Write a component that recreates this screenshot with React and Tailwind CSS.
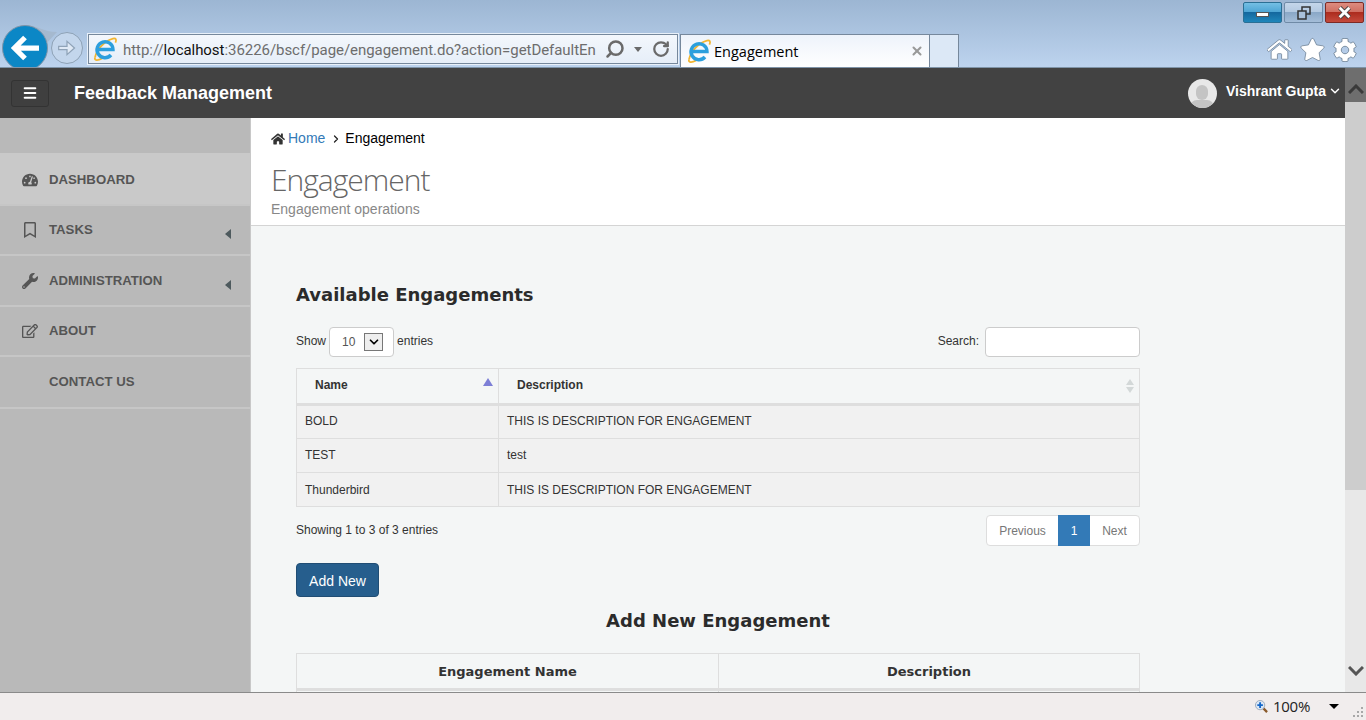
import { Search, RotateCw, X, ChevronDown, ChevronRight, Menu } from "lucide-react";
import { FaHome, FaStar, FaCog, FaTachometerAlt, FaRegBookmark, FaWrench, FaRegEdit } from "react-icons/fa";

const IeLogo = ({ className }) => (
    <svg viewBox="0 0 26 26" className={className}>
        <path d="M3 21.5C4.5 14 12 5 21 2.6c3-.7 3.8 1.2 2.4 4" fill="none" stroke="#f2b632" strokeWidth="1.8" />
        <path d="M3 21.5c-1 3 2.500 3.500 7 1" fill="none" stroke="#f2b632" strokeWidth="1.8" />
        <path d="M6.500 13.500h14.500a8 8 0 1 0-2 5.500" fill="none" stroke="#2c9fdd" strokeWidth="3.400" />
    </svg>
);

const navItems = [
    { label: "DASHBOARD", icon: FaTachometerAlt, active: true, h: "h-[53px] pt-[2px]" },
    { label: "TASKS", icon: FaRegBookmark, arrow: true, h: "h-[50px]" },
    { label: "ADMINISTRATION", icon: FaWrench, arrow: true, h: "h-[51px]" },
    { label: "ABOUT", icon: FaRegEdit, h: "h-[50px]" },
    { label: "CONTACT US", h: "h-[52px]" },
];

const rows = [
    ["BOLD", "THIS IS DESCRIPTION FOR ENGAGEMENT", "pb-[2px]"],
    ["TEST", "test", "pb-[2px]"],
    ["Thunderbird", "THIS IS DESCRIPTION FOR ENGAGEMENT", "pb-0"],
];

const BrowserChrome = () => (
    <div className="relative h-[68px] shrink-0 overflow-hidden bg-gradient-to-b from-[#9cb6d3] to-[#bdd3ee] border-b border-[#7f94a8]">
        <div className="flex justify-end gap-[2px] pt-[2px] pr-[2px]">
            <div className="w-[39px] h-[21px] rounded-[2px] border border-[#2b6f94] bg-[linear-gradient(#74bfe4_0%,#4ba3d3_50%,#14689f_50%,#1f86ba_100%)] flex items-center justify-center">
                <div className="w-[13px] h-[5px] mt-[4px] bg-white border border-[#555]"></div>
            </div>
            <div className="w-[39px] h-[21px] rounded-[2px] border border-[#6f8aa6] bg-[linear-gradient(#c4d6ea_0%,#b2c8e0_50%,#8aa8c7_50%,#a4bdd8_100%)] flex items-center justify-center">
                <svg viewBox="0 0 14 14" className="w-[14px] h-[14px]" fill="none" stroke="#333" strokeWidth="1.5">
                    <rect x="5" y="1" width="8" height="7" />
                    <rect x="1" y="5" width="8" height="8" fill="#a9c0d9" />
                </svg>
            </div>
            <div className="w-[39px] h-[21px] rounded-[2px] border border-[#7d2a25] bg-[linear-gradient(#dd8c80_0%,#cf6d60_50%,#ad2c1e_50%,#c44a3c_100%)] flex items-center justify-center">
                <svg viewBox="0 0 14 14" className="w-[15px] h-[15px]">
                    <path d="M2.500 2.500l9 9M11.500 2.500l-9 9" stroke="#444" strokeWidth="4.200" />
                    <path d="M2.500 2.500l9 9M11.500 2.500l-9 9" stroke="#fff" strokeWidth="2.600" />
                </svg>
            </div>
        </div>
        <div className="flex items-start pl-[88px] mt-[11px]">
            <div className="w-[590px] h-[30px] bg-gradient-to-b from-[#f3f7fc] to-[#e6eef8] border border-[#76889c] flex items-center shadow-[0_0_0_1px_#e8f0f9]">
                <IeLogo className="w-[26px] h-[26px] ml-[3px] mr-[5px] shrink-0" />
                <div className="w-[474px] shrink-0 whitespace-nowrap text-[15px] tracking-[-0.05px] text-[#6d6d6d] font-['Roboto',sans-serif] leading-none pt-[2px]">
                    http://<span className="text-[#111]">localhost</span>:36226/bscf/page/engagement.do?action=getDefaultEn
                </div>
                <Search className="w-[20px] h-[20px] ml-[8px] text-[#6a6a6a] -scale-x-100" strokeWidth={3} />
                <div className="ml-[9px] w-0 h-0 border-x-[4px] border-x-transparent border-t-[5px] border-t-[#6a6a6a]"></div>
                <RotateCw className="w-[18px] h-[18px] ml-[10px] text-[#6a6a6a]" strokeWidth={3} />
            </div>
            <div className="ml-[2px] w-[250px] h-[33px] bg-gradient-to-b from-[#eef3fb] to-white border border-b-0 border-[#76889c] flex items-center">
                <IeLogo className="w-[26px] h-[26px] ml-[5px] mr-[2px] shrink-0" />
                <span className="text-[14.5px] text-black font-['Open_Sans',sans-serif] flex-1 pt-[2px]">Engagement</span>
                <X className="w-[14px] h-[14px] mr-[5px] text-[#999]" strokeWidth={3.5} />
            </div>
            <div className="w-[29px] h-[33px] bg-[#dce8f6] border border-l-0 border-b-0 border-[#76889c]"></div>
            <div className="ml-auto flex items-center gap-[8px] pr-[9px] mt-[3px]">
                <FaHome className="w-[25px] h-[25px] text-white stroke-[#5f7488] stroke-[16px]" />
                <FaStar className="w-[25px] h-[25px] text-white stroke-[#5f7488] stroke-[16px]" />
                <FaCog className="w-[24px] h-[24px] text-white stroke-[#5f7488] stroke-[16px]" />
            </div>
        </div>
        {/* back / forward buttons hang over the toolbar, the page bar clips them */}
        <svg viewBox="0 0 40 20" className="absolute left-[25px] top-[25px] w-[40px] h-[20px]">
            <path d="M0 0C12 0 18 7 32 7L20 20H0z" fill="#a5b9cf" />
        </svg>
        <div className="absolute left-[2px] top-[25px] w-[46px] h-[46px] rounded-full bg-[#0b87c6] border border-[#7f94a8] flex items-center justify-center">
            <svg viewBox="0 0 24 24" className="w-[28px] h-[28px]" fill="none" stroke="white" strokeWidth="4.500">
                <path d="M24 12H4M12 3l-9 9 9 9" />
            </svg>
        </div>
        <div className="absolute left-[51px] top-[32px] w-[32px] h-[32px] rounded-full bg-[#c3d6ec] border border-[#8ea2b6] flex items-center justify-center">
            <svg viewBox="0 0 24 24" className="w-[20px] h-[20px]" fill="#dfe9f5" stroke="#8fa3b8" strokeWidth="1.500">
                <path d="M2 10h10V4l9 8-9 8v-6H2z" />
            </svg>
        </div>
    </div>
);

const Navbar = () => (
    <div className="h-[50px] shrink-0 bg-[#424242] flex items-center">
        <div className="ml-[11px] w-[38px] h-[27px] rounded-[3px] border border-[#333] bg-[#3f3f3f] flex items-center justify-center">
            <Menu className="w-[16px] h-[16px] text-white" strokeWidth={3} />
        </div>
        <span className="ml-[25px] text-[18px] font-bold text-white">Feedback Management</span>
        <div className="ml-auto flex items-center">
            <div className="w-[29px] h-[29px] rounded-full bg-[#e8e8e8] overflow-hidden relative flex justify-center">
                <div className="w-[12px] h-[15px] mt-[6px] rounded-full bg-[#c4c4c4]"></div>
                <div className="absolute -bottom-[6px] w-[24px] h-[14px] rounded-full bg-[#c4c4c4]"></div>
            </div>
            <span className="ml-[9px] -mt-[4px] text-[14px] font-bold text-white">Vishrant Gupta</span>
            <ChevronDown className="w-[14px] h-[14px] ml-[2px] mr-[3px] -mt-[4px] text-white" strokeWidth={2.5} />
        </div>
    </div>
);

const Sidebar = () => (
    <aside className="w-[251px] shrink-0 bg-[#b9b9b9] border-r border-[#c8c8c8] pt-[35px]">
        {navItems.map((item) => (
            <div key={item.label} className={`${item.h} ${item.active ? "bg-[#c9c9c9]" : ""} border-b-2 border-[#c6c6c6] flex items-center`}>
                <div className="w-[49px] flex justify-center pl-[22px] pr-[11px]">
                    {item.icon && <item.icon className="w-[16px] h-[16px] shrink-0 text-[#555]" />}
                </div>
                <span className="text-[13.2px] font-bold text-[#555]">{item.label}</span>
                {item.arrow && <div className="ml-auto mr-[19px] mt-[8px] w-0 h-0 border-y-[5px] border-y-transparent border-r-[6px] border-r-[#4e5a5e]"></div>}
            </div>
        ))}
    </aside>
);

const App = () => {
    return (
        <div className="h-[720px] w-[1366px] overflow-hidden flex flex-col bg-[#f4f6f6] font-['Liberation_Sans',sans-serif]">
            <BrowserChrome />
            <div className="flex flex-1 min-h-0">
                <div className="flex-1 min-w-0 flex flex-col">
                    <Navbar />
                    <div className="flex flex-1 min-h-0">
                        <Sidebar />
                        <main className="flex-1 min-w-0 overflow-hidden">
                            <div className="h-[108px] bg-white border-b border-[#d4d4d4] px-[20px] pt-[10px]">
                                <div className="flex items-center text-[14px] text-black">
                                    <FaHome className="w-[14px] h-[14px] text-[#333]" />
                                    <span className="ml-[3px] text-[#337ab7]">Home</span>
                                    <ChevronRight className="w-[12px] h-[12px] ml-[5px] mr-[3px] text-[#222]" strokeWidth={2.5} />
                                    <span>Engagement</span>
                                </div>
                                <h1 className="mt-[13px] text-[30px] leading-[36px] tracking-[-1px] font-light text-[#666] font-['Open_Sans',sans-serif]">Engagement</h1>
                                <p className="mt-[1px] text-[14px] text-[#888]">Engagement operations</p>
                            </div>
                            <div className="w-[844px] ml-[45px]">
                                <h2 className="mt-[57px] text-[18px] leading-[24px] font-bold text-[#2b2b2b] font-['DejaVu_Sans',sans-serif]">Available Engagements</h2>
                                <div className="mt-[20px] flex items-center justify-between text-[12px] text-[#333]">
                                    <div className="flex items-center">
                                        <span className="-mt-[2px]">Show</span>
                                        <div className="ml-[3px] mr-[3px] w-[65px] h-[30px] bg-white border border-[#ccc] rounded-[4px] flex items-center justify-between pl-[12px] pr-[10px]">
                                            <span className="text-[#555]">10</span>
                                            <div className="w-[19px] h-[18px] border border-[#777] bg-[#eee] flex items-center justify-center">
                                                <ChevronDown className="w-[14px] h-[14px] text-black" strokeWidth={3} />
                                            </div>
                                        </div>
                                        <span className="-mt-[2px]">entries</span>
                                    </div>
                                    <div className="flex items-center">
                                        <span className="-mt-[2px]">Search:</span>
                                        <div className="ml-[6px] w-[155px] h-[30px] bg-white border border-[#ccc] rounded-[4px]"></div>
                                    </div>
                                </div>
                                <table className="mt-[11px] w-full border-collapse table-fixed text-[12px] text-[#333]">
                                    <thead>
                                        <tr className="h-[36px]">
                                            <th className="w-[202px] border border-b-[3px] border-[#dedede] text-left pl-[18px] pb-[2px] relative font-bold">
                                                Name
                                                <span className="absolute right-[5px] top-[9px] w-0 h-0 border-x-[5px] border-x-transparent border-b-[8px] border-b-[#7d7fd6]"></span>
                                            </th>
                                            <th className="border border-b-[3px] border-[#dedede] text-left pl-[18px] pb-[2px] relative font-bold">
                                                Description
                                                <span className="absolute right-[5px] top-[10px] w-0 h-0 border-x-[4px] border-x-transparent border-b-[6px] border-b-[#d3d8d8]"></span>
                                                <span className="absolute right-[5px] top-[18px] w-0 h-0 border-x-[4px] border-x-transparent border-t-[6px] border-t-[#d3d8d8]"></span>
                                            </th>
                                        </tr>
                                    </thead>
                                    <tbody className="bg-[#f1f1f1]">
                                        {rows.map(([name, desc, pad]) => (
                                            <tr key={name} className="h-[34px]">
                                                <td className={`border border-[#dedede] pl-[8px] ${pad}`}>{name}</td>
                                                <td className={`border border-[#dedede] pl-[8px] ${pad}`}>{desc}</td>
                                            </tr>
                                        ))}
                                    </tbody>
                                </table>
                                <div className="mt-[8px] flex items-start justify-between text-[12px] text-[#333]">
                                    <span className="mt-[6px]">Showing 1 to 3 of 3 entries</span>
                                    <div className="flex h-[31px] items-stretch bg-white border border-[#ddd] rounded-[4px] text-[#777]">
                                        <span className="w-[71px] flex items-center justify-center">Previous</span>
                                        <span className="w-[32px] -my-px flex items-center justify-center bg-[#337ab7] text-white">1</span>
                                        <span className="w-[49px] flex items-center justify-center">Next</span>
                                    </div>
                                </div>
                                <button className="mt-[17px] block w-[83px] h-[34px] pt-[2px] rounded-[4px] border border-[#204d74] bg-[#265e8d] text-[14px] text-white">Add New</button>
                                <h2 className="mt-[12px] text-center text-[18px] leading-[24px] font-bold text-[#2b2b2b] font-['DejaVu_Sans',sans-serif]">Add New Engagement</h2>
                                <div className="mt-[20px] flex h-[38px] border border-[#dedede] border-b-[3px] text-[13px] font-bold text-[#333] font-['DejaVu_Sans',sans-serif]">
                                    <div className="w-[422px] border-r border-[#dedede] flex items-center justify-center pt-[2px]">Engagement Name</div>
                                    <div className="flex-1 flex items-center justify-center pt-[2px]">Description</div>
                                </div>
                                <div className="flex h-[10px] border-x border-[#dedede]">
                                    <div className="w-[422px] border-r border-[#dedede]"></div>
                                </div>
                            </div>
                        </main>
                    </div>
                </div>
                {/* page scrollbar runs the full height, next to the navbar too */}
                <div className="w-[21px] shrink-0 bg-[#e8e8e8] flex flex-col">
                    <div className="h-[34px] bg-[#6e6e6e] flex items-center justify-center pt-[8px]">
                        <svg viewBox="0 0 16 10" className="w-[16px] h-[10px]" fill="none" stroke="#3a3a3a" strokeWidth="3">
                            <path d="M1 9l7-7 7 7" />
                        </svg>
                    </div>
                    <div className="h-[388px] bg-[#cdcdcd]"></div>
                    <div className="mt-auto h-[42px] flex items-center justify-center">
                        <svg viewBox="0 0 16 10" className="w-[16px] h-[10px]" fill="none" stroke="#555" strokeWidth="3">
                            <path d="M1 1l7 7 7-7" />
                        </svg>
                    </div>
                </div>
            </div>
            <div className="h-[28px] shrink-0 bg-[#f1eded] border-t border-[#8a8a8a] flex items-center justify-end">
                <svg viewBox="0 0 14 14" className="w-[13px] h-[13px]">
                    <path d="M8 8l5 5" stroke="#8a5a2b" strokeWidth="2.500" />
                    <circle cx="5.500" cy="5.500" r="5" fill="#dbe7f5" stroke="#9aa9b8" />
                    <path d="M5.500 2.500v6M2.500 5.500h6" stroke="#1467c8" strokeWidth="2" />
                </svg>
                <span className="ml-[5px] text-[15px] tracking-[-0.3px] text-[#222] font-['Open_Sans',sans-serif]">100%</span>
                <div className="ml-[19px] w-0 h-0 border-x-[5px] border-x-transparent border-t-[5px] border-t-black"></div>
                <svg viewBox="0 0 12 12" className="ml-[13px] mr-[2px] mt-[10px] w-[12px] h-[12px]" fill="#a8a8a8">
                    <rect x="9" y="1" width="2" height="2" />
                    <rect x="5" y="5" width="2" height="2" />
                    <rect x="9" y="5" width="2" height="2" />
                    <rect x="1" y="9" width="2" height="2" />
                    <rect x="5" y="9" width="2" height="2" />
                    <rect x="9" y="9" width="2" height="2" />
                </svg>
            </div>
        </div>
    );
};

export default App;
